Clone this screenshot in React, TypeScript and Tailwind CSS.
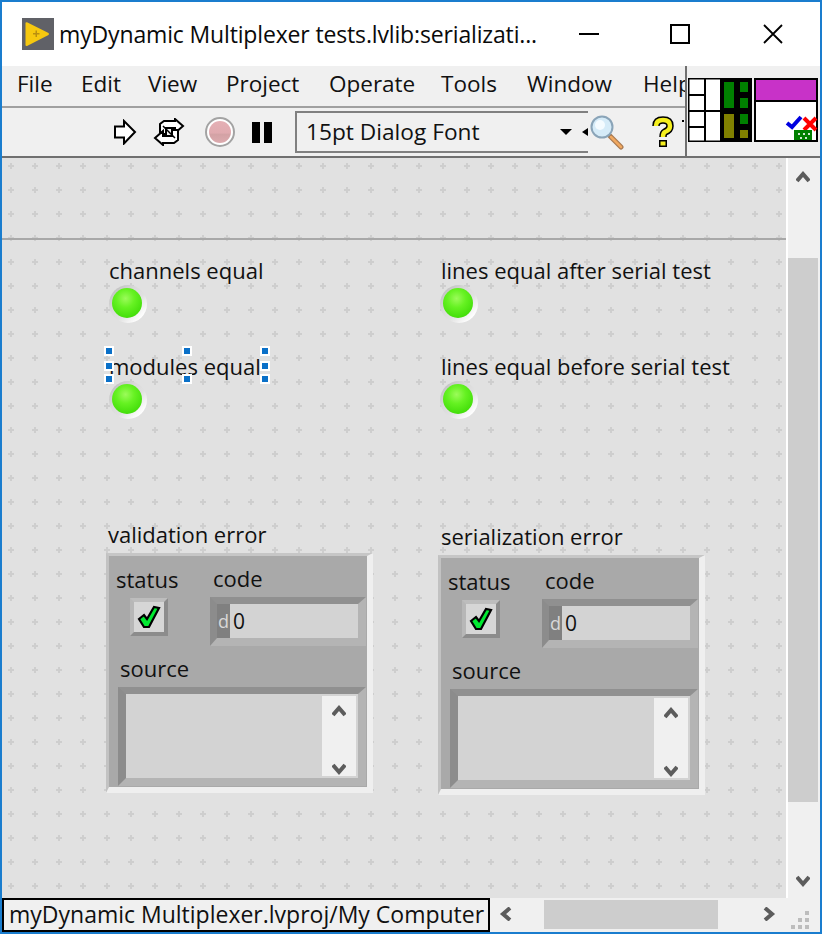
import React from "react";

const font = "font-['Open_Sans','Noto_Sans',sans-serif]";

function Chevron({ dir, className }: { dir: "up" | "down" | "left" | "right"; className?: string }) {
  const pts = {
    up: "1,11 7,4 13,11",
    down: "1,3 7,10 13,3",
    left: "11,1 4,7 11,13",
    right: "3,1 10,7 3,13",
  }[dir];
  return (
    <svg width="14" height="14" viewBox="0 0 14 14" className={className}>
      <polyline points={pts} fill="none" stroke="#5c5c5c" strokeWidth="4" />
    </svg>
  );
}

function AppIcon() {
  return (
    <svg width="32" height="32" viewBox="0 0 32 32" className="shrink-0">
      <rect width="32" height="32" fill="#606167" />
      <path d="M3.5 5 Q3.5 4 5 4.2 L26.5 15 Q27.5 16 26.5 17 L5 28 Q3.5 28.3 3.5 27 Z" fill="#f6c80f" />
      <path d="M11 15h2.5v-2.500h1.500v2.500h2.500v1.500h-2.500v2.500h-1.500v-2.500h-2.500z" fill="#b98f10" />
    </svg>
  );
}

function RunArrow() {
  return (
    <svg width="24" height="26" viewBox="0 0 24 26" className="shrink-0">
      <polygon points="2,7.500 11,7.500 11,2 22,13 11,24.500 11,18.500 2,18.500" fill="#fff" stroke="#000" strokeWidth="2" />
    </svg>
  );
}

function RunContinuous() {
  const arrow = "M8 16 L8 6 L12 3 L23 3 L23 1 L31 8 L23 15 L23 10 L14 10 L14 16 Z";
  return (
    <svg width="34" height="28" viewBox="0 0 34 28" className="shrink-0">
      <path d={arrow} fill="#fff" stroke="#000" strokeWidth="2" />
      <path d={arrow} fill="#fff" stroke="#000" strokeWidth="2" transform="rotate(180 17 14)" />
      <path d="M11 8 L23 20" stroke="#000" strokeWidth="1.500" />
    </svg>
  );
}

function AbortButton() {
  return (
    <div className="size-[30px] rounded-full border-2 border-[#a3a3a3] bg-white p-[2px] shrink-0">
      <div className="size-full rounded-full bg-[linear-gradient(180deg,#e5b0b5_0%,#e0aaaf_55%,#d3a2a5_60%,#dcaaae_100%)]" />
    </div>
  );
}

function PauseButton() {
  return (
    <div className="flex gap-[4px] shrink-0">
      <div className="w-[8px] h-[21px] bg-black" />
      <div className="w-[8px] h-[21px] bg-black" />
    </div>
  );
}

function Magnifier() {
  return (
    <svg width="36" height="36" viewBox="0 0 36 36" className="shrink-0">
      <line x1="21" y1="22" x2="32" y2="33" stroke="#a87a52" strokeWidth="5" strokeLinecap="round" />
      <line x1="22" y1="23" x2="32" y2="33" stroke="#f0a860" strokeWidth="2.500" strokeLinecap="round" />
      <circle cx="13" cy="13" r="10.500" fill="#d5ebf8" stroke="#8aa4b8" strokeWidth="2" />
      <circle cx="11" cy="11" r="5" fill="#f4fbff" />
    </svg>
  );
}

function HelpIcon() {
  const d = "M4 10 Q4 4 11 4 Q18 4 18 10 Q18 14 13 16 Q11 17 11 21";
  return (
    <svg width="22" height="32" viewBox="0 0 22 32" className="shrink-0">
      <path d={d} fill="none" stroke="#000" strokeWidth="7.500" />
      <rect x="7" y="24" width="8" height="7" fill="#000" />
      <path d={d} fill="none" stroke="#f5ef1e" strokeWidth="4.500" />
      <rect x="8.500" y="25.500" width="5" height="4" fill="#f5ef1e" />
    </svg>
  );
}

function ConnectorPane() {
  return (
    <svg width="64" height="64" viewBox="0 0 64 64" className="shrink-0">
      <rect width="64" height="64" fill="#000" />
      {[
        [1.5, 1.5, 14.5, 14.5],
        [1.5, 18, 14.5, 14],
        [1.5, 34, 14.5, 14],
        [1.5, 50, 14.5, 12.5],
        [18, 1.5, 14, 30.5],
        [18, 34, 14, 28.5],
      ].map(([x, y, w, h], i) => (
        <rect key={i} x={x} y={y} width={w} height={h} fill="#fff" />
      ))}
      <rect x="36" y="4" width="10" height="26" fill="#008000" />
      <rect x="36" y="36" width="10" height="24" fill="#808000" />
      <rect x="52" y="4" width="8" height="10" fill="#008000" />
      <rect x="52" y="20" width="8" height="10" fill="#008000" />
      <rect x="52" y="36" width="8" height="10" fill="#008000" />
      <rect x="52" y="52" width="8" height="8" fill="#808000" />
    </svg>
  );
}

function ViIcon() {
  return (
    <svg width="64" height="64" viewBox="0 0 64 64" className="shrink-0">
      <rect width="64" height="64" fill="#000" />
      <rect x="2" y="2" width="60" height="20" fill="#c832c8" />
      <rect x="2" y="24" width="60" height="38" fill="#fff" />
      <path d="M33 45 L38 49 L47 39" fill="none" stroke="#0000e0" strokeWidth="4" />
      <path d="M50 40 L62 52 M62 40 L50 52" stroke="#ff0000" strokeWidth="4" />
      <rect x="40" y="52" width="18" height="10" fill="#008000" />
      <path d="M44 55h2v2h-2zM49 55h2v2h-2zM54 55h2v2h-2zM46 59h2v2h-2zM51 59h2v2h-2z" fill="#d0e8d0" />
    </svg>
  );
}

function Check() {
  return (
    <svg width="26" height="26" viewBox="0 0 26 26">
      <path d="M3 15 L8 11 L11 15 L18 3 L23 4 L13 23 L8 23 Z" fill="#00e830" stroke="#000" strokeWidth="2.200" />
    </svg>
  );
}

function Led() {
  return (
    <div className="relative size-[38px] rounded-full bg-[linear-gradient(135deg,#c2c2c2_12%,#dadada_38%,#e1e1e1_58%,#ffffff_85%)]">
      <div className="absolute left-[3px] top-[3px] size-[30px] rounded-full bg-[radial-gradient(circle_at_45%_35%,#9cfb5a_0%,#66f222_35%,#46e00c_72%,#3cc40c_100%)]" />
    </div>
  );
}

function Indicator({ label, className, ledClass }: { label: string; className: string; ledClass?: string }) {
  return (
    <div className={`absolute flex flex-col ${className}`}>
      <span className="text-[22px] leading-[28px] text-[#111] whitespace-nowrap">{label}</span>
      <div className={`mt-[1px] ${ledClass ?? ""}`}>
        <Led />
      </div>
    </div>
  );
}

function ErrorCluster({ className, title, titleClass }: { className: string; title: string; titleClass: string }) {
  return (
    <div className={`absolute ${className}`}>
      <div className={`mb-[5px] text-[22px] leading-[28px] text-[#111] whitespace-nowrap ${titleClass}`}>{title}</div>
      <div className="w-[267px] h-[240px] border-t-[3px] border-l-[3px] border-r-[6px] border-b-[6px] border-t-[#c6c6c6] border-l-[#c2c2c2] border-r-[#efefef] border-b-[#efefef] bg-[#a9a9a9] text-[22px] leading-[28px] text-[#111]">
        <div className="flex h-[90px]">
          <div className="w-[101px] pt-[10px] pl-[7px]">
            <div className="-mt-[1px] mb-[1px]">status</div>
            <div className="ml-[14px] mt-[5px] size-[38px] border-[4px] border-t-[#bdbdbd] border-l-[#b7b7b7] border-r-[#8c8c8c] border-b-[#8c8c8c] bg-[#d6d6d6] flex items-center justify-center">
              <Check />
            </div>
          </div>
          <div className="pt-[8px]">
            <div className="ml-[3px]">code</div>
            <div className="mt-[5px] w-[156px] h-[49px] border-t-[7px] border-l-[7px] border-r-[8px] border-b-[8px] border-t-[#909090] border-l-[#8c8c8c] border-r-[#b4b4b4] border-b-[#b4b4b4] bg-[#d3d3d3] flex items-center">
              <div className="w-[13px] h-full bg-[#808080] text-[#d8d8d8] text-[18px] leading-[34px] text-center">d</div>
              <div className="ml-[3px] text-[21px] leading-[34px]">0</div>
            </div>
          </div>
        </div>
        <div className="ml-[11px] mt-[8px]">source</div>
        <div className="ml-[9px] mt-[5px] w-[248px] h-[99px] border-t-[7px] border-l-[8px] border-r-[8px] border-b-[8px] border-t-[#909090] border-l-[#8c8c8c] border-r-[#b4b4b4] border-b-[#b4b4b4] bg-[#d3d3d3] flex justify-end">
          <div className="w-[34px] my-[2px] mr-[2px] bg-[#f0f0f0] flex flex-col items-center justify-between pt-[8px]">
            <Chevron dir="up" />
            <Chevron dir="down" />
          </div>
        </div>
      </div>
    </div>
  );
}

function Handle({ className }: { className: string }) {
  return <div className={`absolute size-[10px] border-2 border-white bg-[#0a70c8] ${className}`} />;
}

function Grid() {
  return (
    <svg className="absolute inset-0 size-full" aria-hidden="true">
      <defs>
        <pattern id="dots" x="-2" y="-2" width="24" height="24" patternUnits="userSpaceOnUse">
          <path d="M9 9h1v-2h2v2h2v2h-2v2h-2v-2h-2v-2h1z" fill="#cecece" />
        </pattern>
      </defs>
      <rect width="100%" height="100%" fill="url(#dots)" />
    </svg>
  );
}

const menus: [string, string][] = [
  ["File", "w-[64px]"],
  ["Edit", "w-[67px]"],
  ["View", "w-[78px]"],
  ["Project", "w-[103px]"],
  ["Operate", "w-[112px]"],
  ["Tools", "w-[86px]"],
  ["Window", "w-[116px]"],
  ["Help", "w-[60px]"],
];

export default function App() {
  return (
    <div className={`w-[822px] h-[934px] border-2 border-[#1a7dce] bg-[#f0f0f0] flex flex-col overflow-hidden ${font}`}>
      {/* Title bar */}
      <div className="h-[64px] bg-white flex items-center pl-[20px] shrink-0">
        <AppIcon />
        <div className="ml-[5px] w-[478px] text-[23px] tracking-[-0.15px] leading-[32px] text-[#0a0a0a] whitespace-nowrap">
          myDynamic Multiplexer tests.lvlib:serializati...
        </div>
        <div className="ml-[42px] w-[20px] h-[2px] bg-black" />
        <div className="ml-[71px] size-[20px] border-2 border-black" />
        <svg width="22" height="22" viewBox="0 0 22 22" className="ml-[72px]">
          <path d="M2 2 L20 20 M20 2 L2 20" stroke="#000" strokeWidth="1.800" />
        </svg>
      </div>

      {/* Menu + toolbar + icon pane */}
      <div className="h-[92px] flex shrink-0 border-b-2 border-[#707070]">
        <div className="w-[683px] flex flex-col overflow-hidden">
          <div className="h-[42px] flex items-center pl-[15px] pb-[4px] border-b-2 border-[#a0a0a0] shrink-0">
            {menus.map(([m, w]) => (
              <span key={m} className={`${w} shrink-0 text-[22.5px] leading-[30px] text-[#111]`}>{m}</span>
            ))}
          </div>
          <div className="flex-1 flex items-center pl-[111px]">
            <RunArrow />
            <div className="ml-[15px]"><RunContinuous /></div>
            <div className="ml-[19px]"><AbortButton /></div>
            <div className="ml-[17px]"><PauseButton /></div>
            <div className="ml-[23px] w-[293px] h-[42px] border-2 border-r-0 border-[#808080] flex items-center pl-[9px] shrink-0">
              <span className="text-[22.7px] leading-[30px] text-[#111] whitespace-nowrap">15pt Dialog Font</span>
              <div className="ml-auto mr-[10px] w-0 h-0 border-x-[6px] border-x-transparent border-t-[6px] border-t-black" />
              <div className="w-0 h-0 border-y-[4px] border-y-transparent border-r-[6px] border-r-black" />
            </div>
            <div className="ml-[1px]"><Magnifier /></div>
            <div className="ml-[27px]"><HelpIcon /></div>
            <div className="ml-[8px] w-[2px] h-[2px] bg-black -translate-y-[11px] shrink-0" />
          </div>
        </div>
        <div className="w-[2px] bg-[#707070] shrink-0" />
        <div className="flex-1 flex items-start pl-[1px] pt-[12px] gap-[2px]">
          <ConnectorPane />
          <ViIcon />
        </div>
      </div>

      {/* Canvas + vertical scrollbar */}
      <div className="h-[740px] flex shrink-0">
        <div className="relative w-[786px] h-full border-r-2 border-white bg-[#e1e1e1] overflow-hidden">
          <Grid />
          <div className="absolute left-0 right-0 top-[80px] h-[2px] bg-[#a8a8a8]" />

          <Indicator label="channels equal" className="left-[107px] top-[98px]" />
          <Indicator label="modules equal" className="left-[107px] top-[194px]" />
          <Indicator label="lines equal after serial test" className="left-[439px] top-[98px]" ledClass="-ml-[1px]" />
          <Indicator label="lines equal before serial test" className="left-[439px] top-[194px]" ledClass="-ml-[1px]" />

          <Handle className="left-[102px] top-[188px]" />
          <Handle className="left-[102px] top-[203px]" />
          <Handle className="left-[102px] top-[216px]" />
          <Handle className="left-[180px] top-[188px]" />
          <Handle className="left-[180px] top-[216px]" />
          <Handle className="left-[258px] top-[188px]" />
          <Handle className="left-[258px] top-[203px]" />
          <Handle className="left-[258px] top-[216px]" />

          <ErrorCluster className="left-[104px] top-[362px]" title="validation error" titleClass="ml-[2px]" />
          <ErrorCluster className="left-[436px] top-[364px]" title="serialization error" titleClass="ml-[3px]" />
        </div>
        <div className="flex-1 flex flex-col">
          <Chevron dir="up" className="ml-[8px] mt-[12px]" />
          <div className="mt-[74px] w-[30px] h-[544px] bg-[#cdcdcd]" />
          <Chevron dir="down" className="ml-[8px] mt-[72px]" />
        </div>
      </div>

      {/* Status + horizontal scrollbar */}
      <div className="flex-1 flex items-start">
        <div className="w-[488px] h-[34px] border-2 border-black bg-[#f0f0f0] pl-[5px] text-[23px] leading-[28px] text-[#111] whitespace-nowrap overflow-hidden shrink-0">
          myDynamic Multiplexer.lvproj/My Computer
        </div>
        <Chevron dir="left" className="ml-[9px] mt-[9px]" />
        <div className="ml-[31px] mt-[2px] w-[174px] h-[29px] bg-[#cdcdcd]" />
        <Chevron dir="right" className="ml-[44px] mt-[9px]" />
        <svg width="20" height="20" viewBox="0 0 20 20" className="ml-[15px] mt-[12px]">
          <path d="M14 1h4v4h-4zM7 8h4v4h-4zM14 8h4v4h-4zM0 15h4v4h-4zM7 15h4v4h-4zM14 15h4v4h-4z" fill="#bdbdbd" />
        </svg>
      </div>
    </div>
  );
}
